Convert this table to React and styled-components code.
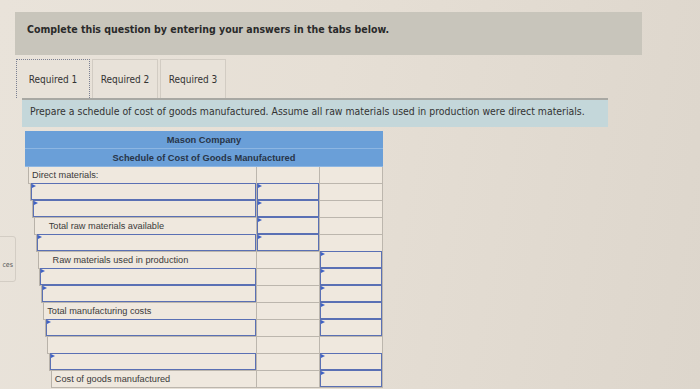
import React from 'react';
import styled, { createGlobalStyle } from 'styled-components';

const GlobalStyle = createGlobalStyle`
	html, body {
		margin: 0;
		padding: 0;
		height: 100%;
		overflow: hidden;
	}
	body {
		background: linear-gradient(100deg, #e9e3da 0%, #e6dfd5 45%, #ddd6cc 100%);
	}
`;

// which cells of each row hold an answer box: [label, col2, col3]
const ROWS = [
	{ text: 'Direct materials:', inputs: [false, false, false] },
	{ inputs: [true, true, false] },
	{ inputs: [true, true, false] },
	{ text: 'Total raw materials available', indent: true, inputs: [false, true, false] },
	{ inputs: [true, true, false] },
	{ text: 'Raw materials used in production', indent: true, inputs: [false, false, true] },
	{ inputs: [true, false, true] },
	{ inputs: [true, false, true] },
	{ text: 'Total manufacturing costs', inputs: [false, false, true] },
	{ inputs: [true, false, true] },
	{ inputs: [false, false, false] },
	{ inputs: [true, false, true] },
	{ text: 'Cost of goods manufactured', inputs: [false, false, true] }
];

const App = () => {
	return (
		<Page>
			<GlobalStyle />
			<SideTab>ces</SideTab>
			<Banner>Complete this question by entering your answers in the tabs below.</Banner>
			<Tabs>
				<Tab active>Required 1</Tab>
				<Tab>Required 2</Tab>
				<Tab>Required 3</Tab>
			</Tabs>
			<Instruction>
				Prepare a schedule of cost of goods manufactured. Assume all raw materials used in production were direct materials.
			</Instruction>
			<Schedule>
				<HeadRow>Mason Company</HeadRow>
				<HeadRow>Schedule of Cost of Goods Manufactured</HeadRow>
				{ROWS.map((row, i) => (
					<Row key={i} shift={i}>
						<Cell>
							{row.inputs[0] ? <AnswerBox /> : <Label indent={row.indent}>{row.text}</Label>}
						</Cell>
						<Cell>{row.inputs[1] && <AnswerBox />}</Cell>
						<Cell>{row.inputs[2] && <AnswerBox />}</Cell>
					</Row>
				))}
			</Schedule>
		</Page>
	);
};

const Page = styled.div`
	position: relative;
	height: 389px;
	padding: 12px 0 0 15px;
	box-sizing: border-box;
	font-family: 'DejaVu Sans Condensed', 'DejaVu Sans', sans-serif;
	color: #2f2f2f;
`;

const SideTab = styled.div`
	position: absolute;
	left: -4px;
	top: 236px;
	width: 20px;
	height: 46px;
	border: 1px solid #d3cdc4;
	border-radius: 3px;
	box-sizing: border-box;
	display: flex;
	align-items: center;
	justify-content: flex-end;
	padding: 12px 2px 0 0;
	font-size: 7px;
	color: #555;
`;

const Banner = styled.div`
	width: 627px;
	height: 43px;
	box-sizing: border-box;
	background: #c8c5bb;
	padding: 11px 0 0 12px;
	font-size: 10.5px;
	font-weight: bold;
	color: #2a2a2a;
`;

const Tabs = styled.div`
	display: flex;
	gap: 2px;
	margin-top: 4px;
	margin-left: 1px;
	height: 39px;
`;

const Tab = styled.div`
	display: flex;
	align-items: center;
	justify-content: center;
	width: ${(p) => (p.active ? '74px' : '66px')};
	font-size: 10px;
	color: #333;
	background: #e8e2d9;
	border: ${(p) => (p.active ? '1.5px dotted #7a7f92' : '1px solid #d2ccc3')};
	border-bottom: none;
	box-sizing: border-box;
`;

const Instruction = styled.div`
	width: 586px;
	height: 29px;
	margin-left: 7px;
	box-sizing: border-box;
	background: #c4d7da;
	border-top: 2px solid #a8a8a3;
	padding: 5px 0 0 8px;
	font-size: 10.4px;
	color: #333;
	white-space: nowrap;
`;

const Schedule = styled.div`
	width: 358px;
	margin: 4px 0 0 10px;
	font-family: 'Liberation Sans', Arial, sans-serif;
`;

const HeadRow = styled.div`
	height: 18px;
	box-sizing: border-box;
	background: #6a9fd8;
	border-bottom: 1px solid #8db6e2;
	display: flex;
	align-items: center;
	justify-content: center;
	font-size: 9.3px;
	font-weight: bold;
	color: #283548;
`;

const Row = styled.div`
	display: grid;
	grid-template-columns: 1fr 63px 63px;
	height: 17px;
	margin-left: ${(p) => 3 + p.shift * 1.9}px;
	background: #efe8de;
	border-left: 1px solid #b8b2a9;
	border-bottom: 1px solid #bcb6ad;
	box-sizing: border-box;
`;

const Cell = styled.div`
	position: relative;
	border-right: 1px solid #bcb6ad;
	display: flex;
	align-items: center;
	min-width: 0;
`;

const Label = styled.span`
	padding-left: ${(p) => (p.indent ? '14px' : '3px')};
	font-size: 9.2px;
	color: #3a3a3a;
	white-space: nowrap;
`;

const AnswerBox = styled.div`
	position: absolute;
	inset: -1px 0 0 0;
	border: 1.5px solid #5a70b4;
	box-sizing: border-box;

	&::before {
		content: '';
		position: absolute;
		top: 0;
		left: 0;
		border-left: 4px solid #3f62c4;
		border-top: 2.5px solid transparent;
		border-bottom: 2.5px solid transparent;
	}
`;

export default App;
